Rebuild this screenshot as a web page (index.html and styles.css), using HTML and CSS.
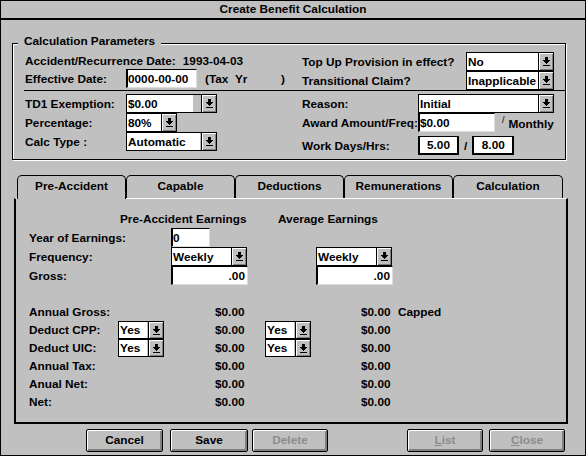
FILE: index.html
```html
<!DOCTYPE html>
<html>
<head>
<meta charset="utf-8">
<title>Create Benefit Calculation</title>
<link rel="stylesheet" href="styles.css">
</head>
<body>
<div class="window">
  <div class="titlebar">Create Benefit Calculation</div>

  <div class="group">
    <span class="legend">Calculation Parameters</span>
    <div class="gtop">
      <div class="gleft">
        <div class="row r17"><span>Accident/Recurrence Date:</span><span class="accdate">1993-04-03</span></div>
        <div class="row"><span class="lbl l101">Effective Date:</span><span class="inp w71">0000-00-00</span><span class="taxyr">(Tax&nbsp;&nbsp;Yr</span><span>)</span></div>
      </div>
      <div class="gright">
        <div class="row"><span class="lbl l164">Top Up Provision in effect?</span><span class="dd w88"><span class="val v71">No</span><span class="btn"><svg class="arr" width="7" height="9" viewBox="0 0 7 9" shape-rendering="crispEdges"><path d="M2 0h3v3h2v1h-1v1h-1v1h-1v1h-1v-1h-1v-1h-1v-1h-1v-1h2zM0 8h7v1H0z"/></svg></span></span></div>
        <div class="row"><span class="lbl l164">Transitional Claim?</span><span class="dd w88"><span class="val v71">Inapplicable</span><span class="btn"><svg class="arr" width="7" height="9" viewBox="0 0 7 9" shape-rendering="crispEdges"><path d="M2 0h3v3h2v1h-1v1h-1v1h-1v1h-1v-1h-1v-1h-1v-1h-1v-1h2zM0 8h7v1H0z"/></svg></span></span></div>
      </div>
    </div>
    <div class="sep"></div>
    <div class="gbot">
      <div class="gleft">
        <div class="row"><span class="lbl l101">TD1 Exemption:</span><span class="dd w91"><span class="val v66">$0.00</span><span class="btn"><svg class="arr" width="7" height="9" viewBox="0 0 7 9" shape-rendering="crispEdges"><path d="M2 0h3v3h2v1h-1v1h-1v1h-1v1h-1v-1h-1v-1h-1v-1h-1v-1h2zM0 8h7v1H0z"/></svg></span></span></div>
        <div class="row"><span class="lbl l101">Percentage:</span><span class="dd w51"><span class="val v34">80%</span><span class="btn"><svg class="arr" width="7" height="9" viewBox="0 0 7 9" shape-rendering="crispEdges"><path d="M2 0h3v3h2v1h-1v1h-1v1h-1v1h-1v-1h-1v-1h-1v-1h-1v-1h2zM0 8h7v1H0z"/></svg></span></span></div>
        <div class="row"><span class="lbl l101">Calc Type :</span><span class="dd w91"><span class="val v73">Automatic</span><span class="btn"><svg class="arr" width="7" height="9" viewBox="0 0 7 9" shape-rendering="crispEdges"><path d="M2 0h3v3h2v1h-1v1h-1v1h-1v1h-1v-1h-1v-1h-1v-1h-1v-1h2zM0 8h7v1H0z"/></svg></span></span></div>
      </div>
      <div class="gright">
        <div class="row"><span class="lbl l116">Reason:</span><span class="dd w136"><span class="val v119">Initial</span><span class="btn"><svg class="arr" width="7" height="9" viewBox="0 0 7 9" shape-rendering="crispEdges"><path d="M2 0h3v3h2v1h-1v1h-1v1h-1v1h-1v-1h-1v-1h-1v-1h-1v-1h2zM0 8h7v1H0z"/></svg></span></span></div>
        <div class="row"><span class="lbl l116">Award Amount/Freq:</span><span class="inp w77">$0.00</span><span class="slash-up">/</span><span class="monthly">Monthly</span></div>
        <div class="row mt4"><span class="lbl l116">Work Days/Hrs:</span><span class="inp box w41">5.00</span><span class="slash">/</span><span class="inp box w42">8.00</span></div>
      </div>
    </div>
  </div>

  <div class="tabarea">
    <div class="tabs">
      <div class="tab active">Pre-Accident</div>
      <div class="tab">Capable</div>
      <div class="tab">Deductions</div>
      <div class="tab">Remunerations</div>
      <div class="tab last">Calculation</div>
    </div>
    <div class="panel">
      <div class="phead"><span class="ph1">Pre-Accident Earnings</span><span>Average Earnings</span></div>
      <div class="urow"><span class="ulbl">Year of Earnings:</span><span class="ucell"><span class="inp w39">0</span></span></div>
      <div class="urow"><span class="ulbl">Frequency:</span>
        <span class="ucell"><span class="dd w76"><span class="val v59">Weekly</span><span class="btn"><svg class="arr" width="7" height="9" viewBox="0 0 7 9" shape-rendering="crispEdges"><path d="M2 0h3v3h2v1h-1v1h-1v1h-1v1h-1v-1h-1v-1h-1v-1h-1v-1h2zM0 8h7v1H0z"/></svg></span></span></span>
        <span class="ucell"><span class="dd w76"><span class="val v59">Weekly</span><span class="btn"><svg class="arr" width="7" height="9" viewBox="0 0 7 9" shape-rendering="crispEdges"><path d="M2 0h3v3h2v1h-1v1h-1v1h-1v1h-1v-1h-1v-1h-1v-1h-1v-1h2zM0 8h7v1H0z"/></svg></span></span></span>
      </div>
      <div class="urow"><span class="ulbl">Gross:</span>
        <span class="ucell"><span class="inp right w77">.00</span></span>
        <span class="ucell"><span class="inp right w77">.00</span></span>
      </div>

      <div class="lower">
        <div class="lrow"><span>Annual Gross:</span><span></span><span>$0.00</span><span></span><span>$0.00</span><span>Capped</span></div>
        <div class="lrow"><span>Deduct CPP:</span>
          <span><span class="dd h18 w46"><span class="val v28">Yes</span><span class="btn"><svg class="arr" width="7" height="9" viewBox="0 0 7 9" shape-rendering="crispEdges"><path d="M2 0h3v3h2v1h-1v1h-1v1h-1v1h-1v-1h-1v-1h-1v-1h-1v-1h2zM0 8h7v1H0z"/></svg></span></span></span>
          <span>$0.00</span>
          <span><span class="dd h18 w46"><span class="val v28">Yes</span><span class="btn"><svg class="arr" width="7" height="9" viewBox="0 0 7 9" shape-rendering="crispEdges"><path d="M2 0h3v3h2v1h-1v1h-1v1h-1v1h-1v-1h-1v-1h-1v-1h-1v-1h2zM0 8h7v1H0z"/></svg></span></span></span>
          <span>$0.00</span><span></span></div>
        <div class="lrow"><span>Deduct UIC:</span>
          <span><span class="dd h18 w46"><span class="val v28">Yes</span><span class="btn"><svg class="arr" width="7" height="9" viewBox="0 0 7 9" shape-rendering="crispEdges"><path d="M2 0h3v3h2v1h-1v1h-1v1h-1v1h-1v-1h-1v-1h-1v-1h-1v-1h2zM0 8h7v1H0z"/></svg></span></span></span>
          <span>$0.00</span>
          <span><span class="dd h18 w46"><span class="val v28">Yes</span><span class="btn"><svg class="arr" width="7" height="9" viewBox="0 0 7 9" shape-rendering="crispEdges"><path d="M2 0h3v3h2v1h-1v1h-1v1h-1v1h-1v-1h-1v-1h-1v-1h-1v-1h2zM0 8h7v1H0z"/></svg></span></span></span>
          <span>$0.00</span><span></span></div>
        <div class="lrow"><span>Annual Tax:</span><span></span><span>$0.00</span><span></span><span>$0.00</span><span></span></div>
        <div class="lrow"><span>Anual Net:</span><span></span><span>$0.00</span><span></span><span>$0.00</span><span></span></div>
        <div class="lrow"><span>Net:</span><span></span><span>$0.00</span><span></span><span>$0.00</span><span></span></div>
      </div>
    </div>
  </div>

  <div class="buttons">
    <div class="b bcancel">Cancel</div>
    <div class="b bsave">Save</div>
    <div class="b bdelete dis">Delete</div>
    <div class="b blist dis"><u>L</u>ist</div>
    <div class="b bclose dis"><u>C</u>lose</div>
  </div>
</div>
</body>
</html>
```

FILE: styles.css
```css
* { box-sizing: border-box; }

body {
  margin: 0;
  background: #c0c0c0;
  font-family: "Liberation Sans", Arial, sans-serif;
  font-weight: bold;
  font-size: 11.8px;
  color: #000;
}

.window {
  width: 586px;
  height: 456px;
  border: 1px solid #000;
  background: #c0c0c0;
  overflow: hidden;
}

.titlebar {
  height: 19px;
  border-bottom: 2px solid #000;
  text-align: center;
  line-height: 17px;
}

/* ---------- Group box ---------- */
.group {
  position: relative;
  margin: 23px 0 0 11px;
  width: 554px;
  height: 117px;
  border: 1px solid #000;
  box-shadow: 1px 1px 0 #fff, inset 1px 1px 0 #fff;
  padding: 8px 0 0 12px;
}

.legend {
  position: absolute;
  left: 5px;
  top: -10px;
  padding: 0 6px;
  line-height: 14px;
  background: #c0c0c0;
}

.gtop { display: flex; height: 38px; }
.gbot { display: flex; margin-top: 3px; }
.gleft { width: 277px; flex: none; }
.gright { flex: none; }

.sep {
  height: 1px;
  background: #000;
  margin-left: -1px;
}

.row {
  display: flex;
  align-items: center;
  height: 19px;
  white-space: nowrap;
}
.r17 { height: 17px; }
.mt4 { margin-top: 4px; }

.lbl { flex: none; white-space: nowrap; }
.l101 { width: 101px; }
.l116 { width: 116px; }
.l164 { width: 164px; }

.accdate { margin-left: 7px; }
.taxyr { margin-left: 8px; width: 76px; }

.slash-up {
  margin-left: 7px;
  margin-bottom: 6px;
  font-size: 9px;
  font-weight: normal;
}
.monthly { margin-left: 4px; margin-top: 2px; }
.slash { margin-left: 5px; margin-right: 5px; }

/* ---------- Inputs ---------- */
.inp {
  flex: none;
  display: flex;
  align-items: center;
  height: 19px;
  background: #fff;
  border-style: solid;
  border-width: 1px 1px 1px 2px;
  border-color: #000 #dcdcdc #dcdcdc #000;
  overflow: hidden;
  white-space: nowrap;
}
.inp.right { justify-content: flex-end; padding-right: 2px; }
.inp.box {
  border: 2px solid #000;
  border-top-width: 1px;
  justify-content: center;
}

.w39 { width: 39px; }
.w41 { width: 41px; }
.w42 { width: 42px; }
.w71 { width: 71px; }
.w77 { width: 77px; }

/* ---------- Dropdowns ---------- */
.dd {
  flex: none;
  display: flex;
  height: 19px;
  border: 1px solid #000;
  background: #c0c0c0;
}
.dd.h18 { height: 18px; }

.val {
  flex: none;
  display: flex;
  align-items: center;
  background: #fff;
  padding-left: 1px;
  overflow: hidden;
  white-space: nowrap;
}

.btn {
  flex: none;
  margin-left: auto;
  width: 15px;
  border-left: 1px solid #000;
  background: #c0c0c0;
  box-shadow: inset 1px 1px 0 #fff, inset -1px -1px 0 #808080;
  display: flex;
  align-items: center;
  justify-content: center;
}
.arr { display: block; fill: #000; }

.w46 { width: 46px; }
.w51 { width: 51px; }
.w76 { width: 76px; }
.w88 { width: 88px; }
.w91 { width: 91px; }
.w136 { width: 136px; }

.v28 { width: 28px; }
.v34 { width: 34px; }
.v59 { width: 59px; }
.v66 { width: 66px; }
.v71 { width: 71px; }
.v73 { width: 73px; }
.v119 { width: 119px; }

/* ---------- Tabs ---------- */
.tabarea {
  margin: 15px 0 0 13px;
  width: 554px;
}

.tabs {
  display: flex;
  height: 23px;
  padding-left: 3px;
}

.tab {
  flex: none;
  width: 109px;
  height: 23px;
  border: 1px solid #000;
  border-bottom: none;
  border-radius: 5px 5px 0 0;
  text-align: center;
  line-height: 21px;
  background: #c0c0c0;
}
.tab.last { width: 110px; }
.tab.active {
  position: relative;
  z-index: 1;
  height: 24px;
}

.panel {
  height: 226px;
  border-top: 1px solid #fff;
  border-left: 2px solid #000;
  border-right: 2px solid #000;
  border-bottom: 2px solid #000;
  padding: 10px 0 0 13px;
}

.phead {
  display: flex;
  align-items: center;
  height: 19px;
}
.ph1 { margin-left: 91px; width: 158px; }

.urow {
  display: flex;
  align-items: center;
  height: 19px;
}
.ulbl { width: 142px; flex: none; }
.ucell { width: 145px; flex: none; display: flex; }

.lower { margin-top: 18px; }
.lrow {
  display: grid;
  grid-template-columns: 89px 97px 50px 96px 37px auto;
  align-items: center;
  height: 18px;
  white-space: nowrap;
}
.lrow > span { display: flex; }

/* ---------- Buttons ---------- */
.buttons {
  display: flex;
  margin-top: 5px;
  padding-left: 85px;
}

.b {
  flex: none;
  height: 23px;
  width: 76px;
  border: 1px solid #000;
  border-radius: 2px;
  box-shadow: inset 1px 1px 0 #fff, inset -2px -2px 0 #808080;
  display: flex;
  align-items: center;
  justify-content: center;
  padding-bottom: 1px;
}
.bcancel { width: 77px; }
.bsave { width: 78px; margin-left: 7px; }
.bdelete { margin-left: 4px; }
.blist { margin-left: 79px; }
.bclose { margin-left: 6px; }
.dis { color: #8c8c8c; }
.dis u { text-decoration-color: #8c8c8c; }
```
